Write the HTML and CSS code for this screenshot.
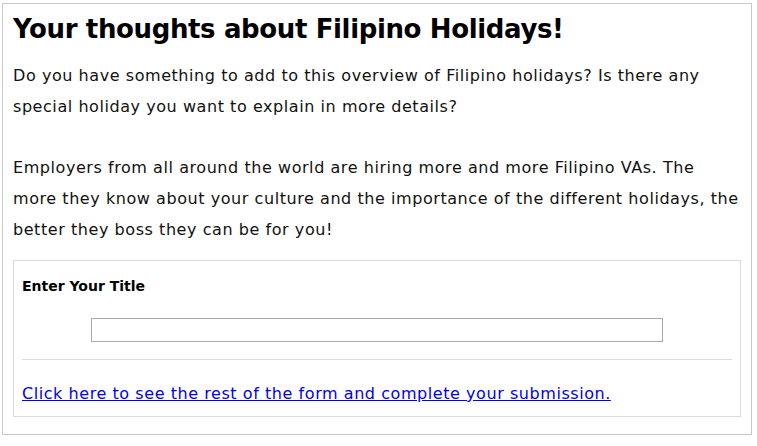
FILE: index.html
```html
<!DOCTYPE html>
<html>
<head>
<meta charset="utf-8">
<link rel="stylesheet" href="styles.css">
</head>
<body>
<div class="outer">
  <h1 class="title">Your thoughts about Filipino Holidays!</h1>
  <p class="text">Do you have something to add to this overview of Filipino holidays? Is there any special holiday you want to explain in more details?</p>
  <p class="text">Employers from all around the world are hiring more and more Filipino VAs. The more they know about your culture and the importance of the different holidays, the better they boss they can be for you!</p>
  <div class="form">
    <div class="label">Enter Your Title</div>
    <div class="field"><input class="input" type="text"></div>
    <div class="rule"></div>
    <a class="link" href="#">Click here to see the rest of the form and complete your submission.</a>
  </div>
</div>
</body>
</html>
```

FILE: styles.css
```css
html, body {
  margin: 0;
  padding: 0;
  background: #fff;
}
body {
  padding: 3px 5px 0 2px;
  font-family: "DejaVu Sans", Verdana, sans-serif;
  color: #000;
}
.outer {
  border: 1px solid #c8c8c8;
  padding: 10px 10px 17px 10px;
  width: 728px;
}
.title {
  margin: 0;
  font-size: 26px;
  line-height: 31px;
  font-weight: bold;
  letter-spacing: -0.37px;
}
.text {
  margin: 15px 0 0 0;
  font-size: 16px;
  line-height: 31px;
  letter-spacing: 0.56px;
  color: #111;
}
.text + .text {
  margin-top: 30px;
}
.form {
  margin-top: 15px;
  border: 1px solid #dcdcdc;
  padding: 16px 8px 12px 8px;
}
.label {
  font-size: 14px;
  font-weight: bold;
  line-height: 18px;
}
.field {
  display: flex;
  justify-content: center;
  margin-top: 23px;
}
.input {
  width: 572px;
  height: 24px;
  box-sizing: border-box;
  border: 1px solid #a9a9a9;
  margin: 0;
  padding: 0;
}
.rule {
  height: 1px;
  background: #dcdcdc;
  margin-top: 17px;
}
.link {
  display: block;
  margin-top: 24px;
  font-size: 16px;
  line-height: 20px;
  letter-spacing: 0.56px;
  color: #0000ee;
}
```
